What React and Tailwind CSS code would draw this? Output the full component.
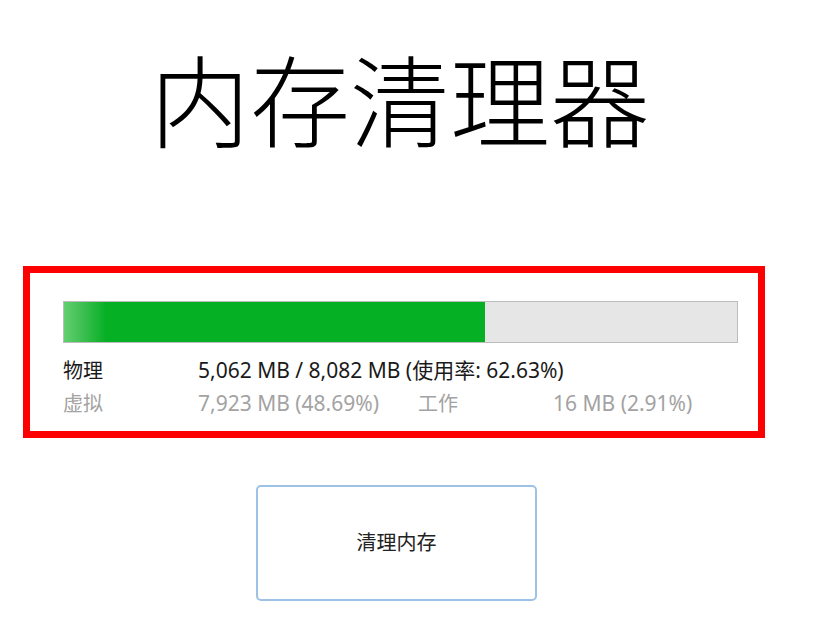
export default function App() {
  return (
    <div className="w-[821px] h-[641px] bg-white overflow-hidden font-['Noto_Sans','Noto_Sans_CJK_SC',sans-serif]">
      <div className="w-[800px] pt-[52px] flex justify-center">
        <h1 className="text-[100px] leading-[110px] font-light text-black font-['Liberation_Serif','Noto_Sans_CJK_SC',serif]">
          内存清理器
        </h1>
      </div>
      <div className="ml-[23px] mt-[104px] w-[742px] h-[172px] border-[7px] border-[#ff0000] pl-[33px] pr-[20px] pt-[28px]">
        <div className="h-[42px] border border-[#bcbcbc] bg-[#e6e6e6] flex">
          <div className="h-full w-[62.63%] bg-[linear-gradient(90deg,#62cf70_0px,#3fbf53_18px,#06b025_42px)]" />
        </div>
        <div className="mt-[11px] text-[21px] leading-[33px]">
          <div className="flex text-[#1a1a1a]">
            <span className="w-[135px] text-[20px]">物理</span>
            <span>5,062 MB / 8,082 MB (使用率: 62.63%)</span>
          </div>
          <div className="flex text-[#a3a3a3]">
            <span className="w-[135px] text-[20px]">虚拟</span>
            <span className="w-[220px]">7,923 MB (48.69%)</span>
            <span className="w-[135px] text-[20px]">工作</span>
            <span>16 MB (2.91%)</span>
          </div>
        </div>
      </div>
      <button className="ml-[256px] mt-[47px] w-[281px] h-[116px] border-2 border-[#9ec2e6] rounded-[5px] bg-white text-[20px] text-[#222] flex items-center justify-center">
        清理内存
      </button>
    </div>
  );
}
